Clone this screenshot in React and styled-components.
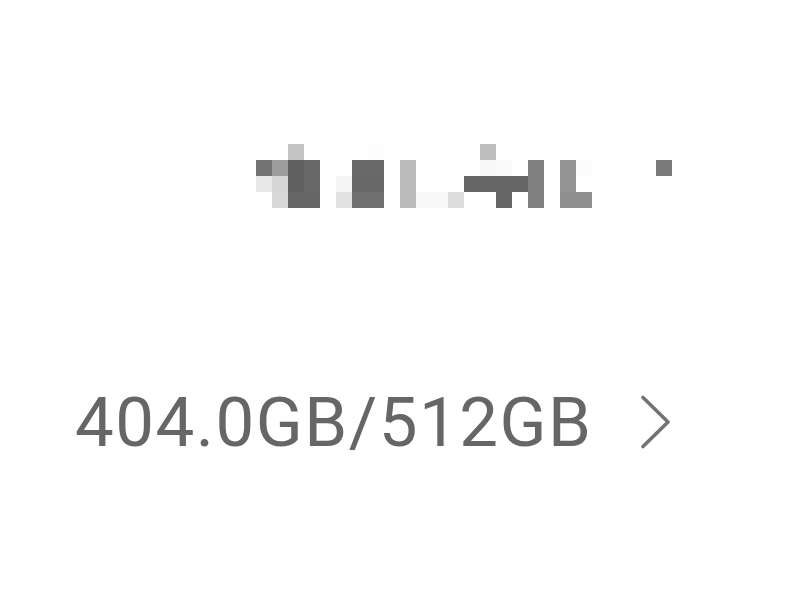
import React from "react";
import styled, { createGlobalStyle } from "styled-components";

const Global = createGlobalStyle`
  html, body { margin: 0; padding: 0; background: #ffffff; }
  body { font-family: Roboto, "Noto Sans", sans-serif; }
`;

const Page = styled.div`
  width: 798px;
  height: 604px;
  background: #ffffff;
  display: flex;
  flex-direction: column;
`;

const MosaicRow = styled.div`
  padding: 144px 0 0 256px;
  height: 64px;
  display: flex;
`;

const StorageRow = styled.div`
  margin-top: 175px;
  padding-left: 75px;
  display: flex;
  align-items: center;
  gap: 45px;
`;

const Value = styled.span`
  font-family: Roboto, "Noto Sans", sans-serif;
  font-size: 69px;
  line-height: 80px;
  color: #666666;
  letter-spacing: 1.5px;
`;

const cells = [
  [0, 2, "#c4c4c4"], [0, 7, "#fdfdfd"], [0, 14, "#bdbdbd"],
  [1, 0, "#737373"], [1, 1, "#9e9e9e"], [1, 2, "#5f5f5f"], [1, 3, "#686868"],
  [1, 6, "#6a6a6a"], [1, 7, "#6a6a6a"], [1, 9, "#bbbbbb"], [1, 14, "#f8f8f8"],
  [1, 15, "#fafafa"], [1, 17, "#808080"], [1, 19, "#939393"], [1, 20, "#fcfcfc"],
  [1, 25, "#7a7a7a"],
  [2, 0, "#e8e8e8"], [2, 1, "#d6d6d6"], [2, 2, "#5f5f5f"], [2, 3, "#686868"],
  [2, 5, "#f5f5f5"], [2, 6, "#676767"], [2, 7, "#676767"], [2, 9, "#bbbbbb"],
  [2, 13, "#666666"], [2, 14, "#666666"], [2, 15, "#666666"], [2, 16, "#666666"],
  [2, 17, "#808080"], [2, 19, "#939393"],
  [3, 1, "#d8d8d8"], [3, 2, "#666666"], [3, 3, "#666666"], [3, 5, "#e2e2e2"],
  [3, 6, "#6f6f6f"], [3, 7, "#6f6f6f"], [3, 9, "#bbbbbb"], [3, 10, "#f9f9f9"],
  [3, 11, "#f9f9f9"], [3, 12, "#dcdcdc"], [3, 15, "#666666"], [3, 17, "#808080"],
  [3, 19, "#8e8e8e"], [3, 20, "#8e8e8e"],
];

function Mosaic() {
  return (
    <svg width="416" height="64" viewBox="0 0 416 64" shapeRendering="crispEdges">
      {cells.map(([r, c, f], i) => (
        <rect key={i} x={c * 16} y={r * 16} width="16" height="16" fill={f} />
      ))}
    </svg>
  );
}

function Chevron() {
  return (
    <svg width="34" height="56" viewBox="0 0 34 56">
      <path d="M5 2.5 L30 27 L5 51.5" fill="none" stroke="#737373" strokeWidth="3.6" strokeLinecap="round" strokeLinejoin="round" />
    </svg>
  );
}

export default function App() {
  return (
    <Page>
      <Global />
      <MosaicRow>
        <Mosaic />
      </MosaicRow>
      <StorageRow>
        <Value>404.0GB/512GB</Value>
        <Chevron />
      </StorageRow>
    </Page>
  );
}
